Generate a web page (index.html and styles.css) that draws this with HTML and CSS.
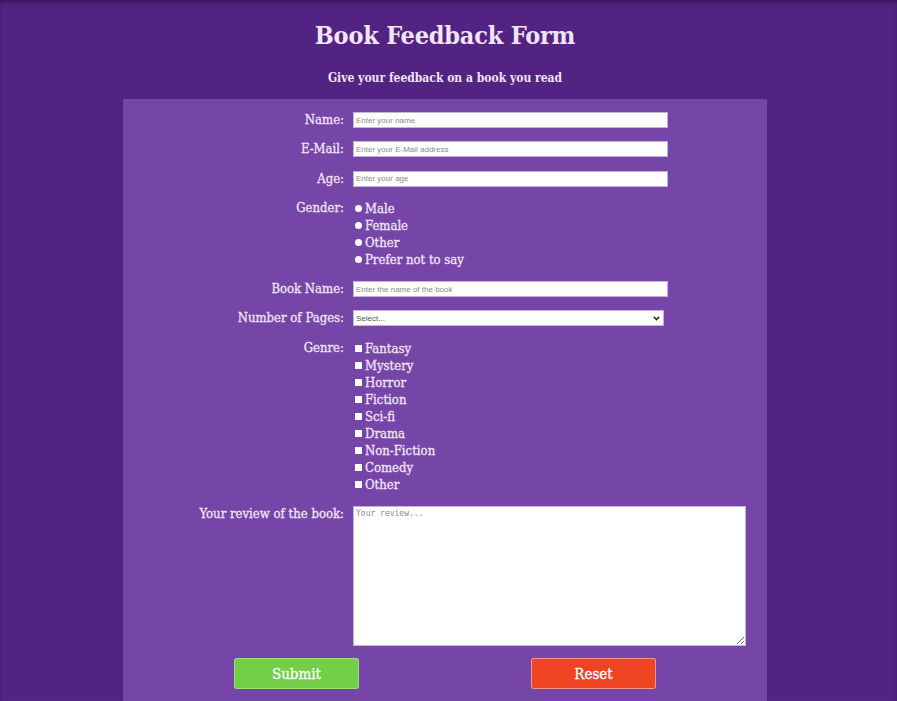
FILE: index.html
```html
<!DOCTYPE html>
<html lang="en">
<head>
<meta charset="utf-8">
<title>Book Feedback Form</title>
<link rel="stylesheet" href="styles.css">
</head>
<body>
<div class="page">
  <header class="top">
    <h1 class="title">Book Feedback Form</h1>
    <p class="subtitle">Give your feedback on a book you read</p>
  </header>
  <form class="card">
    <div class="grid">
      <label class="lbl" for="name">Name:</label>
      <input class="field" id="name" type="text" placeholder="Enter your name">

      <label class="lbl" for="email">E-Mail:</label>
      <input class="field" id="email" type="email" placeholder="Enter your E-Mail address">

      <label class="lbl" for="age">Age:</label>
      <input class="field" id="age" type="text" placeholder="Enter your age">

      <span class="lbl">Gender:</span>
      <div class="options">
        <label class="opt"><input class="radio" type="radio" name="g">Male</label>
        <label class="opt"><input class="radio" type="radio" name="g">Female</label>
        <label class="opt"><input class="radio" type="radio" name="g">Other</label>
        <label class="opt"><input class="radio" type="radio" name="g">Prefer not to say</label>
      </div>

      <label class="lbl" for="book">Book Name:</label>
      <input class="field" id="book" type="text" placeholder="Enter the name of the book">

      <label class="lbl" for="pages">Number of Pages:</label>
      <span class="select-wrap">
        <select class="select" id="pages">
          <option>Select...</option>
          <option>Less than 100</option>
          <option>100 - 300</option>
          <option>More than 300</option>
        </select>
        <svg class="chev" width="7" height="5" viewBox="0 0 7 5" aria-hidden="true">
          <path d="M0.8 0.8 L3.5 3.6 L6.2 0.8" fill="none" stroke="#222" stroke-width="1.5"/>
        </svg>
      </span>

      <span class="lbl">Genre:</span>
      <div class="options">
        <label class="opt"><input class="check" type="checkbox">Fantasy</label>
        <label class="opt"><input class="check" type="checkbox">Mystery</label>
        <label class="opt"><input class="check" type="checkbox">Horror</label>
        <label class="opt"><input class="check" type="checkbox">Fiction</label>
        <label class="opt"><input class="check" type="checkbox">Sci-fi</label>
        <label class="opt"><input class="check" type="checkbox">Drama</label>
        <label class="opt"><input class="check" type="checkbox">Non-Fiction</label>
        <label class="opt"><input class="check" type="checkbox">Comedy</label>
        <label class="opt"><input class="check" type="checkbox">Other</label>
      </div>

      <label class="lbl" for="review">Your review of the book:</label>
      <textarea class="review" id="review" placeholder="Your review..."></textarea>
    </div>
    <div class="actions">
      <button class="btn submit" type="submit">Submit</button>
      <button class="btn reset" type="reset">Reset</button>
    </div>
  </form>
</div>
</body>
</html>
```

FILE: styles.css
```css
* { box-sizing: border-box; }

html, body {
  margin: 0;
  padding: 0;
  background: #522382;
  height: 100%;
  overflow: hidden;
}

body {
  font-family: "DejaVu Serif", serif;
  font-stretch: condensed;
  color: #f1e4f6;
  box-shadow: inset 0 3px 4px -1px rgba(20, 0, 40, 0.45);
}

.page {
  width: 890px;
  display: flex;
  flex-direction: column;
  align-items: center;
}

.top {
  text-align: center;
  padding-top: 20px;
}

.title {
  margin: 0;
  font-size: 25px;
  line-height: 32px;
  font-weight: bold;
  letter-spacing: -0.2px;
}

.subtitle {
  margin: 18px 0 0;
  font-size: 12px;
  line-height: 17px;
  font-weight: bold;
}

.card {
  width: 644px;
  margin-top: 12px;
  background: #7645a8;
  padding: 13px 21px 40px 0;
}

.grid {
  display: grid;
  grid-template-columns: 221px 1fr;
  column-gap: 9px;
  row-gap: 13.3px;
  align-items: start;
}

.lbl {
  text-align: right;
  font-size: 13px;
  line-height: 16px;
  -webkit-text-stroke: 0.3px currentColor;
}

.field {
  width: 315px;
  height: 16px;
  margin: 0;
  padding: 0 2px;
  border: 1px solid #c7b3d9;
  background: #fff;
  font-family: "Liberation Sans", Arial, sans-serif;
  font-size: 8px;
  color: #333;
  outline: none;
}

.field::placeholder,
.review::placeholder {
  color: #8a8a8a;
}

.select-wrap {
  position: relative;
  display: block;
  width: 311px;
  height: 16px;
}

.select {
  appearance: none;
  -webkit-appearance: none;
  display: block;
  width: 311px;
  height: 16px;
  margin: 0;
  padding: 0 2px;
  border: 1px solid #c7b3d9;
  border-radius: 0;
  background: #fff;
  font-family: "Liberation Sans", Arial, sans-serif;
  font-size: 8px;
  color: #555;
}

.chev {
  position: absolute;
  right: 4px;
  top: 6px;
  pointer-events: none;
}

.options {
  display: flex;
  flex-direction: column;
}

.opt {
  display: flex;
  align-items: center;
  font-size: 13px;
  line-height: 17px;
  -webkit-text-stroke: 0.3px currentColor;
}

.radio,
.check {
  appearance: none;
  -webkit-appearance: none;
  width: 7px;
  height: 7px;
  margin: 0 3px 0 2px;
  background: #fff;
  border: none;
}

.radio { border-radius: 50%; }

.review {
  width: 393px;
  height: 140px;
  margin: 0;
  padding: 2px;
  border: 1px solid #c7b3d9;
  background: #fff;
  font-family: "DejaVu Sans Mono", monospace;
  font-size: 8px;
  resize: both;
}

.actions {
  display: flex;
  gap: 172px;
  padding-left: 111px;
  margin-top: 12px;
}

.btn {
  width: 125px;
  height: 31px;
  border: 1px solid rgba(255, 220, 220, 0.55);
  border-radius: 3px;
  color: #fff;
  font-family: "DejaVu Serif", serif;
  font-stretch: condensed;
  font-size: 15px;
  -webkit-text-stroke: 0.3px currentColor;
  cursor: pointer;
}

.submit { background: #72cf48; border-color: rgba(220, 255, 200, 0.4); }
.reset { background: #ee4422; }
```
